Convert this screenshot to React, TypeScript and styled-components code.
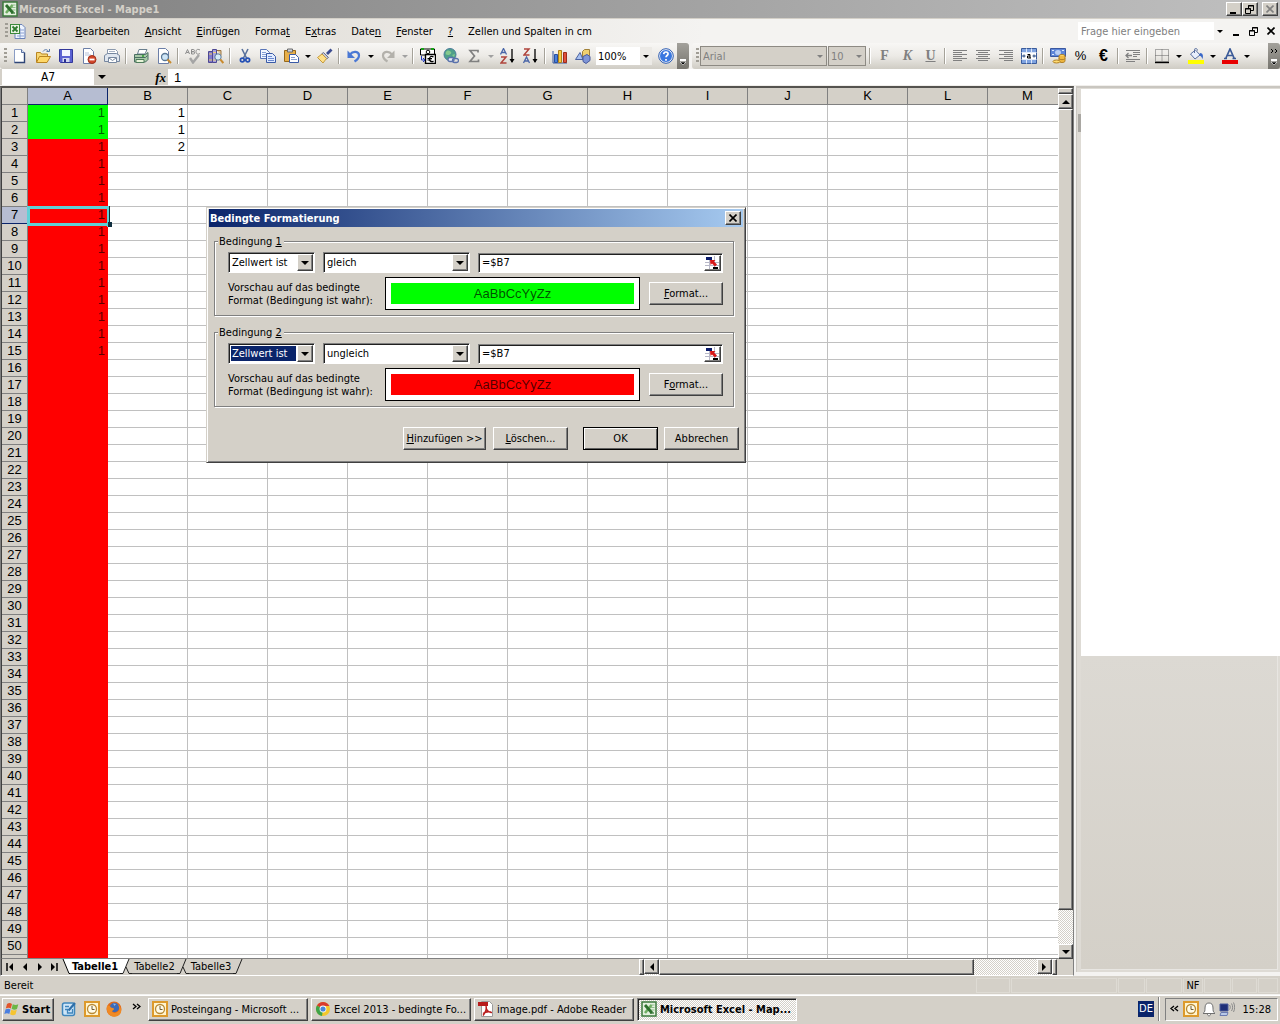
import React, { useState } from "react";
import styled, { createGlobalStyle, css } from "styled-components";

const face = "#d4d0c8";
const ui = `"DejaVu Sans Condensed", "DejaVu Sans", sans-serif`;
const arial = `"Liberation Sans", Arial, sans-serif`;

const GlobalStyle = createGlobalStyle`
  *, *::before, *::after { box-sizing: border-box; }
  body { margin: 0; background: ${face}; font: 11px/13px ${ui}; color: #000; }
  button, input, select { font: inherit; color: inherit; margin: 0; padding: 0; border: 0; border-radius: 0; background: none; outline: 0; }
  button { white-space: nowrap; }
  svg { display: block; flex: none; }
`;

const raised = css`
  background: ${face};
  border: 1px solid;
  border-color: #fff #404040 #404040 #fff;
  box-shadow: inset -1px -1px 0 #808080;
`;
const sunken = css`
  border: 1px solid;
  border-color: #808080 #fff #fff #808080;
  box-shadow: inset 1px 1px 0 #202020;
`;
const dither = css`
  background: repeating-conic-gradient(#fff 0 25%, ${face} 0 50%) 0 0 / 2px 2px;
`;

const Screen = styled.div`
  display: flex;
  flex-direction: column;
  height: 100vh;
  overflow: hidden;
`;

/* ---------- title bar ---------- */
const TitleBar = styled.header`
  display: flex;
  align-items: center;
  gap: 1px;
  height: 18px;
  padding: 0 2px;
  background: linear-gradient(90deg, #808080, #c0c0c0);
  color: ${face};
  font-weight: bold;
`;
const TitleText = styled.h1`
  flex: 1;
  margin: 0;
  font: inherit;
  white-space: nowrap;
`;
const CaptionButton = styled.button<{ $gap?: boolean }>`
  ${raised}
  display: grid;
  place-items: center;
  width: 16px;
  height: 14px;
  margin-left: ${(p) => (p.$gap ? "3px" : "-1px")};
`;

/* ---------- menu bar ---------- */
const MenuBar = styled.nav`
  display: flex;
  align-items: center;
  height: 25px;
  padding: 0 1px 0 5px;
  border-top: 1px solid ${face};
  background: linear-gradient(90deg, #d9d5cd, #f4f3f1 55%);
`;
const MenuItem = styled.button`
  padding: 2px 7px 2px 8px;
`;
const Spacer = styled.div`
  flex: 1;
`;
const Question = styled.div`
  display: flex;
  align-items: center;
  width: 148px;
  height: 18px;
  margin-right: 2px;
  background: #fff;
  input { flex: 1; min-width: 0; padding-left: 3px; }
  input::placeholder { color: #808080; opacity: 1; }
  button { display: grid; place-items: center; width: 12px; height: 18px; background: #f4f3f1; }
`;
const DocButton = styled.button`
  display: grid;
  place-items: center;
  width: 17px;
  height: 16px;
`;

/* ---------- tool bars ---------- */
const ToolRow = styled.div`
  display: flex;
  height: 26px;
  background: #f4f3f1;
`;
const ToolBar = styled.div<{ $fill?: boolean }>`
  display: flex;
  align-items: center;
  flex: ${(p) => (p.$fill ? "1" : "none")};
  height: 26px;
  margin-left: ${(p) => (p.$fill ? "3px" : "0")};
  padding-left: 4px;
  border-radius: 3px 0 0 3px;
  background: linear-gradient(#f8f7f5, #eceae6 50%, #cfccc4);
`;
const Grip = styled.span<{ $menu?: boolean }>`
  width: 3px;
  height: 16px;
  margin-right: ${(p) => (p.$menu ? "2px" : "1px")};
  background: repeating-linear-gradient(#a09d95 0 2px, transparent 2px 4px);
`;
const Tool = styled.button<{ $small?: boolean }>`
  display: grid;
  place-items: center;
  width: ${(p) => (p.$small ? "11px" : "23px")};
  height: 22px;
`;
const Divider = styled.span`
  width: 2px;
  height: 16px;
  margin: 0 2px;
  border-left: 1px solid #a5a299;
  border-right: 1px solid #fff;
`;
const Overflow = styled.button`
  display: grid;
  place-items: end center;
  width: 12px;
  height: 26px;
  margin-left: auto;
  padding-bottom: 3px;
  border-radius: 0 3px 3px 0;
  background: linear-gradient(#a3a19b, #77756f);
`;
const ToolSelect = styled.div<{ $width: number; $off?: boolean }>`
  display: grid;
  grid-template-columns: 1fr 12px;
  align-items: center;
  width: ${(p) => p.$width}px;
  height: ${(p) => (p.$off ? 20 : 18)}px;
  margin: ${(p) => (p.$off ? "0 1px 0 0" : "0 2px")};
  border: ${(p) => (p.$off ? "1px solid #8d8a83" : "0")};
  background: ${(p) => (p.$off ? face : "#fff")};
  color: ${(p) => (p.$off ? "#808080" : "#000")};
  select { grid-area: 1 / 1 / 2 / 3; appearance: none; padding-left: 2px; opacity: 1; color: inherit; }
  span { grid-area: 1 / 2 / 2 / 3; display: grid; place-items: center; height: 100%; pointer-events: none;
    background: ${(p) => (p.$off ? "none" : "#eceae6")}; }
`;
const Letter = styled.span<{ $kind: string }>`
  font: bold 14px/16px "Liberation Serif", "Times New Roman", serif;
  color: #808080;
  font-style: ${(p) => (p.$kind === "K" ? "italic" : "normal")};
  text-decoration: ${(p) => (p.$kind === "U" ? "underline" : "none")};
`;
const Sign = styled.span<{ $big?: boolean }>`
  font: ${(p) => (p.$big ? "bold 16px" : "13px")} / 16px ${arial};
`;

/* ---------- formula bar ---------- */
const FormulaBar = styled.div`
  display: flex;
  height: 17px;
  padding-left: 2px;
  background: ${face};
  border-bottom: 1px solid #f1efec;
`;
const NameBox = styled.input`
  width: 92px;
  background: #fff;
  text-align: center;
  font-size: 12px;
`;
const NameArrow = styled.button`
  display: grid;
  place-items: center;
  width: 16px;
`;
const Fx = styled.button`
  width: 42px;
  margin-left: 16px;
  padding-right: 2px;
  text-align: right;
  font: italic bold 13px/15px "Liberation Serif", serif;
`;
const FormulaInput = styled.input`
  flex: 1;
  min-width: 0;
  padding-left: 6px;
  background: #fff;
  font-family: ${arial};
  font-size: 13px;
`;

/* ---------- workbook ---------- */
const Main = styled.main`
  display: flex;
  flex: 1;
  min-height: 0;
`;
const Book = styled.section`
  display: grid;
  grid-template-rows: 1fr 16px;
  flex: 1;
  min-width: 0;
  border-top: 2px solid #55534f;
  border-left: 1px solid #808080;
  border-bottom: 1px solid #fff;
  border-right: 1px solid #808080;
`;
const SheetArea = styled.div`
  display: grid;
  grid-template-columns: 1fr 15px;
  min-height: 0;
`;
const Viewport = styled.div`
  position: relative;
  overflow: hidden;
  border-left: 1px solid #404040;
  border-bottom: 1px solid #808080;
  background: #fff;
`;
const Sheet = styled.table`
  width: 1066px;
  table-layout: fixed;
  border-collapse: separate;
  border-spacing: 0;
  font: 13px/16px ${arial};
  th, td { height: 17px; padding: 0; overflow: hidden; white-space: nowrap; }
`;
const CornerCol = styled.col`
  width: 26px;
`;
const DataCol = styled.col`
  width: 80px;
`;
const Head = styled.th<{ $on?: boolean }>`
  font-weight: normal;
  background: ${(p) => (p.$on ? "#b6bdd2" : face)};
  border-right: 1px solid ${(p) => (p.$on ? "#0a246a" : "#808080")};
  border-bottom: 1px solid ${(p) => (p.$on ? "#0a246a" : "#808080")};
`;
const Cell = styled.td<{ $fill?: string }>`
  text-align: right;
  border-right: 1px solid ${(p) => p.$fill || "#c0c0c0"};
  border-bottom: 1px solid ${(p) => p.$fill || "#c0c0c0"};
  background: ${(p) => p.$fill || "#fff"};
  color: ${(p) => (p.$fill ? "rgba(0,0,0,.65)" : "#000")};
  span { padding-right: 2px; }
`;
const Cursor = styled.div`
  position: absolute;
  left: 25px;
  top: 118px;
  width: 82px;
  height: 20px;
  border: 3px solid #5fd0d6;
  border-right-width: 2px;
  box-shadow: 1px 0 0 #103030;
  &::after {
    content: "";
    position: absolute;
    right: -5px;
    bottom: -4px;
    width: 5px;
    height: 5px;
    background: #103040;
    border: 1px solid #5fd0d6;
    border-width: 0 0 0 1px;
  }
`;
const VScroll = styled.div`
  display: flex;
  flex-direction: column;
  ${dither}
`;
const SplitV = styled.span`
  ${raised}
  height: 6px;
`;
const ScrollButton = styled.button`
  ${raised}
  display: grid;
  place-items: center;
  width: 15px;
  height: 15px;
  flex: none;
`;
const Thumb = styled.span<{ $grow: number }>`
  ${raised}
  flex: ${(p) => p.$grow} 1 0;
`;
const Track = styled.span<{ $grow: number }>`
  flex: ${(p) => p.$grow} 1 0;
`;
const BottomRow = styled.div`
  display: grid;
  grid-template-columns: 29fr 19fr 16px;
  border-left: 1px solid #404040;
`;
const TabStrip = styled.div`
  display: flex;
  overflow: hidden;
`;
const TabNav = styled.button`
  display: grid;
  place-items: center;
  width: 15px;
  height: 15px;
`;
const Tab = styled.button<{ $on?: boolean }>`
  height: 15px;
  padding: 0 2px;
  border-bottom: 1px solid #404040;
  background: ${(p) => (p.$on ? "#fff" : face)};
  font-weight: ${(p) => (p.$on ? "bold" : "normal")};
`;
const HScroll = styled.div`
  display: flex;
  ${dither}
`;
const SplitH = styled.span`
  ${raised}
  width: 5px;
`;

/* ---------- side pane ---------- */
const Pane = styled.aside`
  position: relative;
  display: flex;
  flex-direction: column;
  width: 206px;
  padding: 3px 0 0 5px;
  border-left: 2px solid #f4f3f1;
  border-bottom: 4px solid #f4f3f1;
  background: #dedbd5;
  box-shadow: inset 0 2px 0 #c9c6c0, inset 1px 0 0 #cbc8c2;
  &::before {
    content: "";
    position: absolute;
    left: 2px;
    top: 28px;
    width: 3px;
    height: 18px;
    background: #a9a7a2;
  }
`;
const PaneBlank = styled.div`
  flex: 568 1 0;
  background: #fff;
`;
const PaneRest = styled.div`
  flex: 313 1 0;
  margin: 0 2px 2px 0;
  border: 1px solid #e8e6e2;
  border-width: 0 1px 1px 0;
  background: linear-gradient(#dcd9d3, #d4d0c8);
`;

/* ---------- status bar ---------- */
const StatusBar = styled.footer`
  display: flex;
  align-items: center;
  height: 19px;
  padding: 0 2px 0 4px;
  border-bottom: 1px solid #f4f3f1;
`;
const StatusCell = styled.span<{ $width: number }>`
  width: ${(p) => p.$width}px;
  height: 15px;
  margin-left: 1px;
  border: 1px solid #dedbd4;
  text-align: center;
`;

/* ---------- task bar ---------- */
const TaskBar = styled.div`
  display: flex;
  align-items: center;
  height: 29px;
  padding: 0 2px 2px 2px;
  border-top: 1px solid #fff;
`;
const StartButton = styled.button`
  ${raised}
  display: flex;
  align-items: center;
  gap: 2px;
  width: 52px;
  height: 23px;
  padding-left: 1px;
  font-weight: bold;
`;
const QuickLaunch = styled.div`
  display: flex;
  align-items: center;
  width: 94px;
  padding-left: 4px;
`;
const Task = styled.button<{ $on?: boolean }>`
  ${(p) => (p.$on ? sunken : raised)}
  ${(p) => (p.$on ? dither : "")}
  display: flex;
  align-items: center;
  gap: 3px;
  flex: 0 1 160px;
  min-width: 0;
  height: 23px;
  margin-right: 3px;
  padding: 0 4px 0 3px;
  font-weight: ${(p) => (p.$on ? "bold" : "normal")};
`;
const Lang = styled.span`
  width: 16px;
  height: 16px;
  background: #0a246a;
  color: #fff;
  line-height: 16px;
  text-align: center;
`;
const TrayLine = styled.span`
  width: 2px;
  height: 24px;
  margin: 0 5px 0 4px;
  border-left: 1px solid #808080;
  border-right: 1px solid #fff;
`;
const Tray = styled.div`
  display: flex;
  align-items: center;
  gap: 2px;
  width: 113px;
  height: 23px;
  padding: 0 6px 0 1px;
  border: 1px solid;
  border-color: #808080 #fff #fff #808080;
  time { margin-left: auto; }
`;

/* ---------- dialog ---------- */
const Dialog = styled.section`
  position: absolute;
  left: 206px;
  top: 207px;
  width: 540px;
  padding: 1px 2px 2px;
  background: ${face};
  border: 1px solid;
  border-color: ${face} #404040 #404040 ${face};
  box-shadow: inset 1px 1px 0 #fff, inset -1px -1px 0 #808080;
`;
const DialogTitle = styled.header`
  display: flex;
  align-items: center;
  height: 18px;
  padding: 0 2px 0 1px;
  background: linear-gradient(90deg, #0a246a, #a6caf0);
  color: #fff;
  font-weight: bold;
  h2 { flex: 1; margin: 0; font: inherit; }
`;
const DialogBody = styled.form`
  display: grid;
  gap: 10px;
  padding: 8px 9px 10px 5px;
`;
const Group = styled.fieldset`
  display: grid;
  gap: 4px;
  margin: 0;
  min-width: 0;
  padding: 4px 10px 5px 13px;
  border: 1px solid #808080;
  box-shadow: 1px 1px 0 #fff, inset 1px 1px 0 #fff;
  legend { margin-left: -10px; padding: 0 2px 0 1px; background: ${face}; }
`;
const Line = styled.div`
  display: flex;
  align-items: center;
`;
const Combo = styled.span<{ $width: number; $on?: boolean }>`
  ${sunken}
  display: grid;
  grid-template-columns: 1fr 16px;
  width: ${(p) => p.$width}px;
  height: 21px;
  margin-right: 8px;
  padding: 1px;
  background: #fff;
  select {
    grid-area: 1 / 1 / 2 / 3;
    appearance: none;
    min-width: 0;
    padding: 1px 17px 1px 1px;
    text-indent: 1px;
    background: ${(p) => (p.$on ? "#0a246a" : "#fff")} content-box;
    color: ${(p) => (p.$on ? "#fff" : "#000")};
  }
  span { ${raised} grid-area: 1 / 2 / 2 / 3; display: grid; place-items: center; pointer-events: none; }
`;
const RefBox = styled.span`
  ${sunken}
  display: flex;
  align-items: center;
  flex: 1;
  height: 20px;
  padding: 1px;
  background: #fff;
  input { flex: 1; min-width: 0; padding-left: 2px; }
  button { ${raised} width: 17px; height: 16px; }
`;
const Caption = styled.p`
  width: 157px;
  margin: 0;
  white-space: nowrap;
`;
const Preview = styled.div<{ $fill: string }>`
  flex: 1;
  height: 33px;
  margin-right: 9px;
  padding: 5px;
  border: 1px solid #000;
  background: #fff;
  div { height: 21px; background: ${(p) => p.$fill}; color: rgba(0,0,0,.7); text-align: center; font: 13px/21px ${arial}; }
`;
const PushButton = styled.button<{ $width: number; $main?: boolean; $gap?: number }>`
  ${raised}
  width: ${(p) => p.$width}px;
  height: 23px;
  margin-left: ${(p) => p.$gap || 0}px;
  ${(p) => p.$main && css`border-color: #000; box-shadow: inset 1px 1px 0 #fff, inset -1px -1px 0 #606060;`}
`;
const Actions = styled.div`
  display: flex;
  justify-content: flex-end;
  margin: 10px -5px 0 0;
`;

/* ---------- drawings ---------- */
const Ico = ({ children, w = 16, h = 16 }: { children: React.ReactNode; w?: number; h?: number }) => (
  <svg width={w} height={h} viewBox={`0 0 ${w} ${h}`} aria-hidden="true">{children}</svg>
);
const Arrow = ({ dir = "d", color = "#000", size = 3 }: { dir?: string; color?: string; size?: number }) => {
  const s = size;
  const pts: Record<string, string> = {
    d: `0,0 ${2 * s},0 ${s},${s}`,
    u: `0,${s} ${2 * s},${s} ${s},0`,
    l: `${s},0 ${s},${2 * s} 0,${s}`,
    r: `0,0 0,${2 * s} ${s},${s}`,
  };
  const tall = dir === "l" || dir === "r";
  return <Ico w={tall ? s : 2 * s} h={tall ? 2 * s : s}><polygon points={pts[dir]} fill={color} /></Ico>;
};
const ExcelIcon = () => (
  <Ico>
    <rect x="1" y="1" width="14" height="14" fill="#e4f0de" stroke="#3c7a3c" strokeWidth="1.500" />
    <path d="M9.500 4h4M9.500 6.500h4M9.500 9h4" stroke="#8fbf8a" />
    <path d="M10.500 4L4 12" stroke="#6fae62" strokeWidth="2.600" />
    <path d="M4 4l7 8" stroke="#2d702d" strokeWidth="2.800" />
    <path d="M9 12h4" stroke="#2d702d" strokeWidth="1.200" />
  </Ico>
);
const BookIcon = () => (
  <Ico>
    <path d="M5 1.500h7l3 3v11H5z" fill="#eef4ff" stroke="#6a82b8" />
    <path d="M7 7h7M7 10h7M7 13h7M10 5v10" stroke="#8aa0d0" />
    <rect x="0.500" y="1.500" width="9" height="9" fill="#e9f3e4" stroke="#3c8a3c" />
    <path d="M2.500 3.500l5 5M7.500 3.500l-5 5" stroke="#2d7a2d" strokeWidth="1.800" />
  </Ico>
);
const ClockIcon = () => (
  <Ico>
    <rect x="1" y="1" width="14" height="14" fill="#fff4cf" stroke="#dd9a2c" strokeWidth="2" />
    <circle cx="8" cy="8" r="4.500" fill="#fffbe8" stroke="#b98a35" strokeWidth="1.300" />
    <path d="M8 5v3.500h2.500" fill="none" stroke="#6b5a35" />
  </Ico>
);
const Min = () => <Ico w={10} h={9}><path d="M1 7h6v2H1z" /></Ico>;
const Restore = () => (
  <Ico w={10} h={9}><path d="M3.500 3V.5h5v5H6M3 1h6M.5 3.500h5v5h-5zM0 4h6" fill="none" stroke="#000" /></Ico>
);
const Close = ({ c = "#000" }) => <Ico w={8} h={8}><path d="M.5.500l7 7M7.500.500l-7 7" stroke={c} strokeWidth="1.600" /></Ico>;

const magnifier = (
  <>
    <circle cx="9" cy="9" r="3.500" fill="#cfe6f7" stroke="#5a7896" strokeWidth="1.300" />
    <path d="M11.500 11.500l3.500 3.500" stroke="#c98b2e" strokeWidth="2" />
  </>
);
const page = <path d="M2.500.500h7l3 3v12h-10z" fill="#fff" stroke="#6c7fa8" />;
const bars = (xs: number[][]) => <path d={xs.map(([x, y, w]) => `M${x} ${y}.5h${w}`).join("")} stroke="#808080" />;

const icons: Record<string, React.ReactNode> = {
  new: <Ico><path d="M2.500 1.500h7l3 3v10h-10z" fill="#fff" stroke="#8a9cc4" /><path d="M12.500 4.500v10h-10" fill="none" stroke="#2f4576" strokeWidth="1.400" /><path d="M9.500 1.500v3h3" fill="#d5deef" stroke="#5a70a0" /></Ico>,
  open: <Ico><path d="M1.500 14V4.500h4l1 1.500h6v3" fill="#f7d774" stroke="#b98520" /><path d="M1.500 14.500l3-6h11l-3.500 6z" fill="#ffd868" stroke="#b98520" /><path d="M8 3.500c2-3 5-2 5.500.5M11.500 3.500h3v-2.500" fill="none" stroke="#5878a8" /></Ico>,
  save: <Ico><path d="M1.500 1.500h13v13h-12l-1-1z" fill="#5b62d2" stroke="#33389a" /><path d="M4 2h8v6H4z" fill="#f2f5ff" /><path d="M4.500 10h7v4h-7z" fill="#d3d8f0" /><path d="M6 11h2v3H6z" fill="#2b3090" /></Ico>,
  perm: <Ico>{page}<path d="M4 5h4M4 7h6" stroke="#b6c1d8" /><circle cx="11" cy="11.500" r="4" fill="#d3472b" stroke="#a33018" /><path d="M8.500 11.500h5" stroke="#fff" strokeWidth="1.800" /></Ico>,
  mail: <Ico><path d="M3.500 6V1.500h8l2 2V7" fill="#fff" stroke="#8b99ad" /><path d="M5 3.500h6M5 5.500h7" stroke="#a9b4c6" /><path d="M.5 7.500l3-2h9l3 2v6h-15z" fill="#dfe6ef" stroke="#76879f" /><path d="M4.500 9.500h8v5h-8z" fill="#fff" stroke="#76879f" /><path d="M5 10l3.500 2.500L12 10" fill="none" stroke="#76879f" /></Ico>,
  print: <Ico><path d="M4.500 6l1.500-4.500h8L12 6z" fill="#fff" stroke="#6a7f8f" /><path d="M1.500 6.500h11l2.500-2v7l-2.500 2.500h-11z" fill="#a9c9a9" stroke="#4a6f62" /><path d="M2 9.500h10.500l2-2" fill="none" stroke="#4a6f62" /><path d="M3 11.500h8v3H3z" fill="#e8f4d9" stroke="#4f7c5c" /><path d="M9 8h2" stroke="#2c9c2c" strokeWidth="1.500" /></Ico>,
  preview: <Ico>{page}{magnifier}</Ico>,
  spell: <Ico><path d="M.5 6l2-4.500L4.500 6M1.300 4.500h2.500M6.500 1.500V6h2a1 1 0 000-2.300h-2 1.800a1 1 0 000-2.200zM15 2c-3-1.500-4 0-4 1.800S12.500 7 15 5.500" fill="none" stroke="#8c8c8c" /><path d="M5 10l3 4.500L14 7" fill="none" stroke="#a5a5a5" strokeWidth="2.400" /></Ico>,
  research: <Ico><path d="M.5 3.500h4v11h-4z" fill="#7f79cc" stroke="#4e4892" /><path d="M4.500 1.500h4v13h-4z" fill="#a7a2df" stroke="#4e4892" /><path d="M1 6h3M5 4.500h3M1 12h3M5 12h3" stroke="#f0d070" /><path d="M9 2.500h4v5" fill="#e4c9a0" stroke="#9a7440" /><circle cx="10" cy="9" r="3.200" fill="#d5ebf8" stroke="#5a7896" /><path d="M12.300 11.300l3 3.700" stroke="#c98b2e" strokeWidth="2" /></Ico>,
  cut: <Ico><path d="M5 1l4.500 9M11 1L6.500 10" stroke="#59719c" strokeWidth="1.600" /><circle cx="5.300" cy="12" r="1.900" fill="none" stroke="#2450b4" strokeWidth="1.700" /><circle cx="10.700" cy="12" r="1.900" fill="none" stroke="#2450b4" strokeWidth="1.700" /></Ico>,
  copy: <Ico><path d="M.5 1.500h6l3 3v6h-9z" fill="#f4f8ff" stroke="#5a76b8" /><path d="M2 4.500h4M2 6.500h4M2 8.500h4" stroke="#86a0d6" /><path d="M6.500 5.500h6l3 3v6h-9z" fill="#e2ecff" stroke="#3a5aa6" /><path d="M8 8.500h4M8 10.500h6M8 12.500h6" stroke="#6c8ad0" /></Ico>,
  paste: <Ico><path d="M1.500 2.500h11v11h-11z" fill="#e8b04a" stroke="#96681a" /><path d="M4.500 1h5v3h-5z" fill="#cfd3dc" stroke="#6a6a6a" /><path d="M6.500 6.500h6l3 3v5h-9z" fill="#fff" stroke="#3a5aa6" /><path d="M8 9.500h4M8 11.500h6" stroke="#8aa0d0" /></Ico>,
  brush: <Ico><path d="M10 6l4.500-4.500" stroke="#3c4c90" strokeWidth="2.800" /><path d="M6.500 4.500l5 5-2 1.500-5-5z" fill="#c5c8d6" stroke="#6b6f86" /><path d="M5 6l4.500 4.500L6 15 .5 9.500z" fill="#ffe08a" stroke="#c59a3c" /></Ico>,
  undo: <Ico><path d="M4 6.500c3-4 9-3.500 9 1 0 3-2 4.500-4.500 6" fill="none" stroke="#4a78d4" strokeWidth="2.200" /><path d="M1.500 2.500v7.500H9z" fill="#4a78d4" /></Ico>,
  redo: <Ico><path d="M12 6.500c-3-4-9-3.500-9 1 0 3 2 4.500 4.500 6" fill="none" stroke="#b3b1ab" strokeWidth="2.200" /><path d="M14.500 2.500v7.500H7z" fill="#b3b1ab" /></Ico>,
  euro: <Ico><path d="M.5 1h14v6H.5z" fill="#fff" stroke="#000" /><path d="M1 1h3M11 1h3" stroke="#19a019" strokeWidth="2" /><circle cx="8" cy="4" r="1.800" fill="none" stroke="#000" /><path d="M5.500 6.500h10v9h-10z" fill="#fff" stroke="#000" strokeWidth="1.400" /><path d="M13.500 9c-2-1.500-4-.5-4 2s2 3.500 4 2M7.500 10.500h4.500M7.500 12h4" fill="none" stroke="#000" strokeWidth="1.200" /><path d="M1.500 8v4h3M3 10l2 2-2 2" fill="none" stroke="#2038c0" /></Ico>,
  link: <Ico><circle cx="7" cy="6.500" r="6" fill="#4fa08a" stroke="#4a7c9c" /><path d="M3 4c2-3 4-1 5 0s-1 3-3 3-3-1-2-3zM9 7l3-1-1 3z" fill="#86c98e" /><rect x="5" y="9.500" width="6" height="4" rx="2" fill="#e4ecf8" stroke="#5a72ac" strokeWidth="1.300" /><rect x="9.500" y="10.500" width="6" height="4" rx="2" fill="none" stroke="#5a72ac" strokeWidth="1.300" /></Ico>,
  sum: <Ico><path d="M12 4.500V2.500H4l4.500 5.500L4 13.500h8.500v-2" fill="none" stroke="#808080" strokeWidth="1.700" /></Ico>,
  az: <Ico><path d="M.5 6.500L3.500.5l3 6M1.500 4.500h4" fill="none" stroke="#4a66a8" strokeWidth="1.300" /><path d="M1 9h5l-5 6h5.500" fill="none" stroke="#b0443c" strokeWidth="1.500" /><path d="M12 1v13" stroke="#000" strokeWidth="1.300" /><path d="M9.500 11h5L12 15z" /></Ico>,
  za: <Ico><path d="M1 1h5L1 7h5.500" fill="none" stroke="#b0443c" strokeWidth="1.500" /><path d="M.5 15l3-6 3 6M1.500 13h4" fill="none" stroke="#4a66a8" strokeWidth="1.300" /><path d="M12 1v13" stroke="#000" strokeWidth="1.300" /><path d="M9.500 11h5L12 15z" /></Ico>,
  chart: <Ico><path d="M1 3v12h14" fill="none" stroke="#3858a0" /><path d="M2.500 6.500h3v8h-3z" fill="#4a80dc" stroke="#2850a0" /><path d="M6.500 2.500h3v12h-3z" fill="#f6cc40" stroke="#b08018" /><path d="M11.500 4.500h3v10h-3z" fill="#e05038" stroke="#9c2c1c" /></Ico>,
  draw: <Ico><path d="M7.500 3.500l2-2h5v6l-2 2h-5z" fill="#f0d070" stroke="#a08038" /><path d="M.5 11.500L5 4.500l3 7z" fill="#a8c0f0" stroke="#4a62a0" /><path d="M8 8.500l4-2 3 2v4l-4 3-3-2z" fill="#7f95d6" stroke="#46599c" /></Ico>,
  help: <Ico><circle cx="8" cy="8" r="6.500" fill="#3a78e0" stroke="#fff" strokeWidth="1" /><circle cx="8" cy="8" r="7.300" fill="none" stroke="#2c5cb4" /><path d="M5.700 6.200C6 3 10.500 3.500 10 6.200 9.800 7.500 8 7.600 8 9.300M8 11v1.700" fill="none" stroke="#fff" strokeWidth="1.700" /></Ico>,
  left: <Ico>{bars([[1, 2, 14], [1, 4, 9], [1, 6, 14], [1, 8, 9], [1, 10, 14], [1, 12, 9]])}</Ico>,
  center: <Ico>{bars([[1, 2, 14], [3, 4, 10], [1, 6, 14], [3, 8, 10], [1, 10, 14], [3, 12, 10]])}</Ico>,
  right: <Ico>{bars([[1, 2, 14], [6, 4, 9], [1, 6, 14], [6, 8, 9], [1, 10, 14], [6, 12, 9]])}</Ico>,
  merge: <Ico><path d="M.5.500h15v15H.5z" fill="#7fa3e0" stroke="#3a5c9c" /><path d="M.5 4.500h15M.5 11.500h15M5.500.500v4M10.500.500v4M5.500 11.500v4M10.500 11.500v4" stroke="#dfe9fa" /><path d="M1 5h14v6H1z" fill="#fff" /><path d="M1 8h3.500M15 8h-3.500M3 6.500v3M13 6.500v3" stroke="#26487e" /><path d="M6.500 6.500h2.500v3.500H6.500V8H9M9 10h1" fill="none" stroke="#000" /></Ico>,
  money: <Ico><path d="M.5.500h15v8H.5z" fill="#5f86d8" stroke="#3a58a0" /><ellipse cx="8" cy="4.500" rx="3" ry="2.500" fill="#b8cdf4" /><path d="M2 2.500h2M12 2.500h2M2 6.500h2" stroke="#dfe9fa" /><ellipse cx="12" cy="8" rx="3" ry="1.500" fill="#ffdc70" stroke="#b08028" /><path d="M9 8v5c0 2 6 2 6 0V8" fill="#f0b840" stroke="#b08028" /><path d="M9 10.500c0 1.500 6 1.500 6 0" fill="none" stroke="#b08028" /><ellipse cx="6.500" cy="13.500" rx="3.500" ry="1.500" fill="#ffdc70" stroke="#b08028" /></Ico>,
  indent: <Ico>{bars([[1, 2, 14], [8, 4, 7], [8, 6, 7], [8, 8, 4], [1, 11, 14], [1, 13, 9]])}<path d="M7 7.500H1M3.500 5L1 7.500 3.500 10" fill="none" stroke="#808080" strokeWidth="1.300" /></Ico>,
  border: <Ico><path d="M1.500 1.500h13v12h-13zM8 1.500v12M1.500 7.500h13" fill="none" stroke="#606060" strokeDasharray="1 1" /><path d="M1 14.500h14" stroke="#000" strokeWidth="1.400" /></Ico>,
  fill: <Ico><path d="M2.500 6l5-4 4.500 5-5 4z" fill="#e8effc" stroke="#5a70a0" /><path d="M6.500 5V1.500c0-1.500 3-1.500 3 1" fill="none" stroke="#5a70a0" /><path d="M12 5c3 0 3.500 3 2.500 6-1-2-1-3-3.500-3.500z" fill="#3a68c8" /><path d="M0 12h16v4H0z" fill="#ffff00" /></Ico>,
  color: <Ico><path d="M3.500 11L8 1l4.500 10M5 7.500h6M2 10.500h3M10.500 10.500H14" fill="none" stroke="#3a5a98" strokeWidth="1.700" /><path d="M0 12h16v4H0z" fill="#e80000" /></Ico>,
};

const StartLogo = () => (
  <Ico>
    <path d="M3 3c2-1.500 3.500-1 5 0L6.800 7.500c-1.500-1-3-1-5 0z" fill="#e2552c" />
    <path d="M8.800 3.300c2 1 3.500 1 5.500 0L13 8c-2 1-3.500.8-5.400-.2z" fill="#6cb644" />
    <path d="M1.500 8.500c2-1.200 3.500-1 5 0L5.300 13c-1.500-1-3-1-5 0z" fill="#4a7fe0" />
    <path d="M7.300 8.800c2 1 3.500 1 5.500 0L11.500 13.500c-2 1-3.500.8-5.400-.2z" fill="#f5c431" />
  </Ico>
);
const DeskIcon = () => <Ico><rect x="1.500" y="2" width="12" height="12.500" rx="2" fill="#cfe6f8" stroke="#3f86bc" strokeWidth="1.500" /><path d="M4 5.500h4M4 8.500h2.500v3.500h5V8" fill="none" stroke="#3f86bc" strokeWidth="1.300" /><path d="M7.500 9.500L14 2" stroke="#2f6fa8" strokeWidth="2.200" /></Ico>;
const FoxIcon = () => <Ico><circle cx="8" cy="8" r="7.500" fill="#e06a1c" /><circle cx="8.500" cy="6.500" r="4.700" fill="#3c6ab8" /><path d="M1 5c2-1 3 0 4 1.500 1 .5 3 0 3 1.500s-2 1-2 2.500c1 2 5 2 7-1 .5-3 0-4-1-6 3 2 4 6 2.500 9-3 4.500-10 4-12.500 0C.8 10 .5 7 1 5z" fill="#f08a24" /><path d="M7 2.500l3 .5-1.500 2z" fill="#8ab4e8" /></Ico>;
const ChromeIcon = () => <Ico><circle cx="8" cy="8" r="7" fill="#f2c72c" /><path d="M8 8L1.900 4.500A7 7 0 0114.100 4.500L14.500 5H8z" fill="#d93a2e" /><path d="M8 8L7 15A7 7 0 011.900 4.500z" fill="#3fa34a" /><circle cx="8" cy="8" r="3.400" fill="#fff" /><circle cx="8" cy="8" r="2.600" fill="#4a86d8" /></Ico>;
const PdfIcon = () => <Ico><path d="M3.500.500h8l3 3v12h-11z" fill="#fff" stroke="#9a9a9a" /><path d="M0 1h10v4H0z" fill="#b81c1c" /><path d="M8 5c1 3-1 7-3 9.500M8 7c1 3 3 4.500 6 4.500M5 12.500c2-1.500 5-2 8-1.500" fill="none" stroke="#b81c1c" strokeWidth="1.500" /></Ico>;
const BellIcon = () => <Ico><path d="M2 12.500c2-1.500 2-3 2-5.500C4 3.500 5.500 2 8 2s4 1.500 4 5c0 2.500 0 4 2 5.500z" fill="#fff" stroke="#707070" /><path d="M6.500 13c0 2.500 3 2.500 3 0" fill="#fff" stroke="#707070" /></Ico>;
const NetIcon = () => <Ico><path d="M1 3h8v7H1z" fill="#1f2f78" stroke="#4a5a9a" /><path d="M2 11.500h7l-1 3H1z" fill="#b9c9e8" stroke="#6a7ab0" /><path d="M10.500 4c1 1.500 1 3 0 4.500M12.500 2.500c1.500 2.500 1.500 5 0 7.500M14.500 1.500c1.500 3 1.500 6.500 0 9.500" fill="none" stroke="#8a8a8a" /></Ico>;
const PickIcon = () => <Ico w={15} h={14}><path d="M0 0h14v13H0z" fill="#fff" /><path d="M1 2.500h6" stroke="#0a1a6a" strokeWidth="3" /><path d="M0 6.500h14M0 9.500h14M4.500 4v9M9.500 0v13" stroke="#b8b8c8" /><path d="M5 4h5.500L9 5.500l3 3-2 2-3-3L5.500 9z" fill="#d81818" /><path d="M8 12h5" stroke="#000" strokeWidth="2" /></Ico>;
const EdgeFirst = () => <Ico w={8} h={15}><path d="M1 0h7v15H7z" fill="#fff" /><path d="M1 0l6 14.500H8" fill="none" stroke="#000" /></Ico>;
const Edge = ({ on, last }: { on?: boolean; last?: boolean }) => (
  <Ico w={12} h={15}>
    {on && <path d="M0 0h9L3 15H0z" fill="#fff" />}
    <path d="M0 14.500h3L9 0" fill="none" stroke="#202020" />
    {!last && <path d="M6 8l3 6.500h3" fill="none" stroke="#202020" />}
  </Ico>
);

/* ---------- pieces ---------- */
const mnemonic = (text: string) => {
  const i = text.indexOf("&");
  if (i < 0) return text;
  return <>{text.slice(0, i)}<u>{text[i + 1]}</u>{text.slice(i + 2)}</>;
};

const menus = ["&Datei", "&Bearbeiten", "&Ansicht", "&Einfügen", "Forma&t", "E&xtras", "Date&n", "&Fenster", "&?", "Zellen und Spalten in cm"];

type Item = [string, string?];
const standard: Item[] = [
  ["new", "Neu"], ["open", "Öffnen"], ["save", "Speichern"], ["perm", "Berechtigung"], ["mail", "E-Mail"], ["|"],
  ["print", "Drucken"], ["preview", "Seitenansicht"], ["|"], ["spell", "Rechtschreibung"], ["research", "Recherchieren"], ["|"],
  ["cut", "Ausschneiden"], ["copy", "Kopieren"], ["paste", "Einfügen"], ["v"], ["brush", "Format übertragen"], ["|"],
  ["undo", "Rückgängig"], ["v"], ["redo", "Wiederholen"], ["-"], ["|"],
  ["euro", "Eurowert"], ["link", "Hyperlink"], ["sum", "AutoSumme"], ["-"], ["az", "Aufsteigend"], ["za", "Absteigend"], ["|"],
  ["chart", "Diagramm"], ["draw", "Zeichnen"],
];
const formatting: Item[] = [
  ["|"], ["F", "Fett"], ["K", "Kursiv"], ["U", "Unterstrichen"], ["|"],
  ["left", "Linksbündig"], ["center", "Zentriert"], ["right", "Rechtsbündig"], ["merge", "Verbinden"], ["|"],
  ["money", "Währung"], ["%", "Prozent"], ["€", "Euro"], ["|"], ["indent", "Einzug verkleinern"], ["|"],
  ["border", "Rahmen"], ["v"], ["fill", "Füllfarbe"], ["v"], ["color", "Schriftfarbe"], ["v"],
];
const Tools = ({ items }: { items: Item[] }) => (
  <>
    {items.map(([name, label], i) => {
      if (name === "|") return <Divider key={i} />;
      if (name === "v" || name === "-")
        return <Tool key={i} $small aria-label="Auswahl"><Arrow color={name === "v" ? "#000" : "#a0a0a0"} /></Tool>;
      return (
        <Tool key={i} aria-label={label}>
          {icons[name] || ("FKU".includes(name) ? <Letter $kind={name}>{name}</Letter> : <Sign $big={name === "€"}>{name}</Sign>)}
        </Tool>
      );
    })}
  </>
);

const columns = "ABCDEFGHIJKLM".split("");
const rows = Array.from({ length: 50 }, (_, i) => i + 1);
const columnB: Record<number, string> = { 1: "1", 2: "1", 3: "2" };

const Grid = () => (
  <Sheet>
    <colgroup>
      <CornerCol />
      {columns.map((c) => <DataCol key={c} />)}
    </colgroup>
    <thead>
      <tr>
        <Head />
        {columns.map((c) => <Head key={c} scope="col" $on={c === "A"}>{c}</Head>)}
      </tr>
    </thead>
    <tbody>
      {rows.map((r) => (
        <tr key={r}>
          <Head scope="row" $on={r === 7}>{r}</Head>
          {columns.map((c) => (
            <Cell key={c} $fill={c === "A" ? (r < 3 ? "#00ff00" : "#ff0000") : undefined}>
              <span>{c === "A" && r <= 15 ? "1" : c === "B" ? columnB[r] : ""}</span>
            </Cell>
          ))}
        </tr>
      ))}
      <tr>
        <Head />
        {columns.map((c) => <Cell key={c} $fill={c === "A" ? "#ff0000" : undefined} />)}
      </tr>
    </tbody>
  </Sheet>
);

const Condition = ({ no, op, fill, active, format }: { no: number; op: string; fill: string; active?: boolean; format: string }) => {
  const [ref, setRef] = useState("=$B7");
  return (
    <Group>
      <legend>Bedingung <u>{no}</u></legend>
      <Line>
        <Combo $width={87} $on={active}>
          <select aria-label={`Bedingung ${no} Typ`}><option>Zellwert ist</option></select>
          <span><Arrow size={4} /></span>
        </Combo>
        <Combo $width={147}>
          <select aria-label={`Bedingung ${no} Vergleich`}><option>{op}</option></select>
          <span><Arrow size={4} /></span>
        </Combo>
        <RefBox>
          <input aria-label={`Bedingung ${no} Wert`} value={ref} onChange={(e) => setRef(e.target.value)} />
          <button type="button" aria-label="Bezug wählen"><PickIcon /></button>
        </RefBox>
      </Line>
      <Line>
        <Caption>Vorschau auf das bedingte<br />Format (Bedingung ist wahr):</Caption>
        <Preview $fill={fill}><div>AaBbCcYyZz</div></Preview>
        <PushButton type="button" $width={74}>{mnemonic(format)}</PushButton>
      </Line>
    </Group>
  );
};

export default function App() {
  const [formula, setFormula] = useState("1");
  const [cell, setCell] = useState("A7");
  return (
    <Screen>
      <GlobalStyle />
      <TitleBar>
        <ExcelIcon />
        <TitleText>Microsoft Excel - Mappe1</TitleText>
        <CaptionButton aria-label="Minimieren"><Min /></CaptionButton>
        <CaptionButton aria-label="Wiederherstellen"><Restore /></CaptionButton>
        <CaptionButton $gap aria-label="Schließen"><Close c="#808080" /></CaptionButton>
      </TitleBar>

      <MenuBar>
        <Grip $menu />
        <BookIcon />
        {menus.map((m) => <MenuItem key={m}>{mnemonic(m)}</MenuItem>)}
        <Spacer />
        <Question>
          <input aria-label="Frage" placeholder="Frage hier eingeben" />
          <button aria-label="Fragen anzeigen"><Arrow /></button>
        </Question>
        <DocButton aria-label="Mappe minimieren"><Min /></DocButton>
        <DocButton aria-label="Mappe wiederherstellen"><Restore /></DocButton>
        <DocButton aria-label="Mappe schließen"><Close /></DocButton>
      </MenuBar>

      <ToolRow>
        <ToolBar>
          <Grip />
          <Tools items={standard} />
          <ToolSelect $width={56}>
            <select aria-label="Zoom"><option>100%</option></select>
            <span><Arrow /></span>
          </ToolSelect>
          <Tool aria-label="Hilfe">{icons.help}</Tool>
          <Overflow aria-label="Weitere Schaltflächen"><Ico w={8} h={7}><path d="M1 1h6" stroke="#fff" strokeWidth="2" /><path d="M1 3h6L4 6z" stroke="#fff" strokeWidth=".6" /></Ico></Overflow>
        </ToolBar>
        <ToolBar $fill>
          <Grip />
          <ToolSelect $width={127} $off>
            <select aria-label="Schriftart" disabled><option>Arial</option></select>
            <span><Arrow color="#808080" /></span>
          </ToolSelect>
          <ToolSelect $width={38} $off>
            <select aria-label="Schriftgrad" disabled><option>10</option></select>
            <span><Arrow color="#808080" /></span>
          </ToolSelect>
          <Tools items={formatting} />
          <Overflow aria-label="Weitere Formatierung"><Ico w={8} h={18}><path d="M1 1l2 2-2 2M5 1l2 2-2 2" fill="none" stroke="#000" /><path d="M1 12h6" stroke="#fff" strokeWidth="2" /><path d="M1 14h6l-3 3z" stroke="#fff" strokeWidth=".6" /></Ico></Overflow>
        </ToolBar>
      </ToolRow>

      <FormulaBar>
        <NameBox aria-label="Namenfeld" value={cell} onChange={(e) => setCell(e.target.value)} />
        <NameArrow aria-label="Namen anzeigen"><Arrow size={4} /></NameArrow>
        <Fx aria-label="Funktion einfügen">fx</Fx>
        <FormulaInput aria-label="Formel" value={formula} onChange={(e) => setFormula(e.target.value)} />
      </FormulaBar>

      <Main>
        <Book>
          <SheetArea>
            <Viewport>
              <Grid />
              <Cursor />
            </Viewport>
            <VScroll>
              <SplitV />
              <ScrollButton aria-label="Nach oben"><Arrow dir="u" size={4} /></ScrollButton>
              <Thumb $grow={800} />
              <Track $grow={34} />
              <ScrollButton aria-label="Nach unten"><Arrow size={4} /></ScrollButton>
            </VScroll>
          </SheetArea>
          <BottomRow>
            <TabStrip>
              <TabNav aria-label="Erstes Blatt"><Ico w={7} h={8}><path d="M1 0v8" stroke="#000" strokeWidth="1.500" /><path d="M7 0v8L3 4z" /></Ico></TabNav>
              <TabNav aria-label="Vorheriges Blatt"><Arrow dir="l" size={4} /></TabNav>
              <TabNav aria-label="Nächstes Blatt"><Arrow dir="r" size={4} /></TabNav>
              <TabNav aria-label="Letztes Blatt"><Ico w={7} h={8}><path d="M6 0v8" stroke="#000" strokeWidth="1.500" /><path d="M0 0v8l4-4z" /></Ico></TabNav>
              <EdgeFirst />
              <Tab $on>Tabelle1</Tab>
              <Edge on />
              <Tab>Tabelle2</Tab>
              <Edge />
              <Tab>Tabelle3</Tab>
              <Edge last />
            </TabStrip>
            <HScroll>
              <SplitH />
              <ScrollButton aria-label="Nach links"><Arrow dir="l" size={4} /></ScrollButton>
              <Thumb $grow={315} />
              <Track $grow={64} />
              <ScrollButton aria-label="Nach rechts"><Arrow dir="r" size={4} /></ScrollButton>
              <SplitH />
            </HScroll>
          </BottomRow>
        </Book>
        <Pane>
          <PaneBlank />
          <PaneRest />
        </Pane>
      </Main>

      <StatusBar>
        Bereit
        <Spacer />
        <StatusCell $width={34} />
        <StatusCell $width={106} />
        <StatusCell $width={27} />
        <StatusCell $width={36} />
        <StatusCell $width={20}>NF</StatusCell>
        <StatusCell $width={27} />
        <StatusCell $width={25} />
        <StatusCell $width={20} />
      </StatusBar>

      <TaskBar>
        <StartButton><StartLogo />Start</StartButton>
        <QuickLaunch>
          <Tool aria-label="Desktop"><DeskIcon /></Tool>
          <Tool aria-label="Outlook"><ClockIcon /></Tool>
          <Tool aria-label="Firefox"><FoxIcon /></Tool>
          <Tool aria-label="Mehr"><Ico w={9} h={12}><path d="M1 1l3 2.500L1 6M5 1l3 2.500L5 6" fill="none" stroke="#000" strokeWidth="1.300" /></Ico></Tool>
        </QuickLaunch>
        <Task><ClockIcon />Posteingang - Microsoft ...</Task>
        <Task><ChromeIcon />Excel 2013 - bedingte Fo...</Task>
        <Task><PdfIcon />image.pdf - Adobe Reader</Task>
        <Task $on><ExcelIcon />Microsoft Excel - Map...</Task>
        <Spacer />
        <Lang>DE</Lang>
        <TrayLine />
        <Tray>
          <Ico w={14} h={10}><path d="M7 2L4 4.500 7 7M11 2L8 4.500 11 7" fill="none" stroke="#000" strokeWidth="1.300" /></Ico>
          <ClockIcon />
          <BellIcon />
          <NetIcon />
          <time>15:28</time>
        </Tray>
      </TaskBar>

      <Dialog role="dialog" aria-labelledby="dlg-title">
        <DialogTitle>
          <h2 id="dlg-title">Bedingte Formatierung</h2>
          <CaptionButton $gap aria-label="Dialog schließen"><Close /></CaptionButton>
        </DialogTitle>
        <DialogBody onSubmit={(e) => e.preventDefault()}>
          <Condition no={1} op="gleich" fill="#00ff00" format="&Format..." />
          <Condition no={2} op="ungleich" fill="#ff0000" format="F&ormat..." active />
          <Actions>
            <PushButton type="button" $width={83}>{mnemonic("&Hinzufügen >>")}</PushButton>
            <PushButton type="button" $width={75} $gap={7}>{mnemonic("&Löschen...")}</PushButton>
            <PushButton type="submit" $width={75} $gap={15} $main>OK</PushButton>
            <PushButton type="button" $width={75} $gap={6}>Abbrechen</PushButton>
          </Actions>
        </DialogBody>
      </Dialog>
    </Screen>
  );
}
